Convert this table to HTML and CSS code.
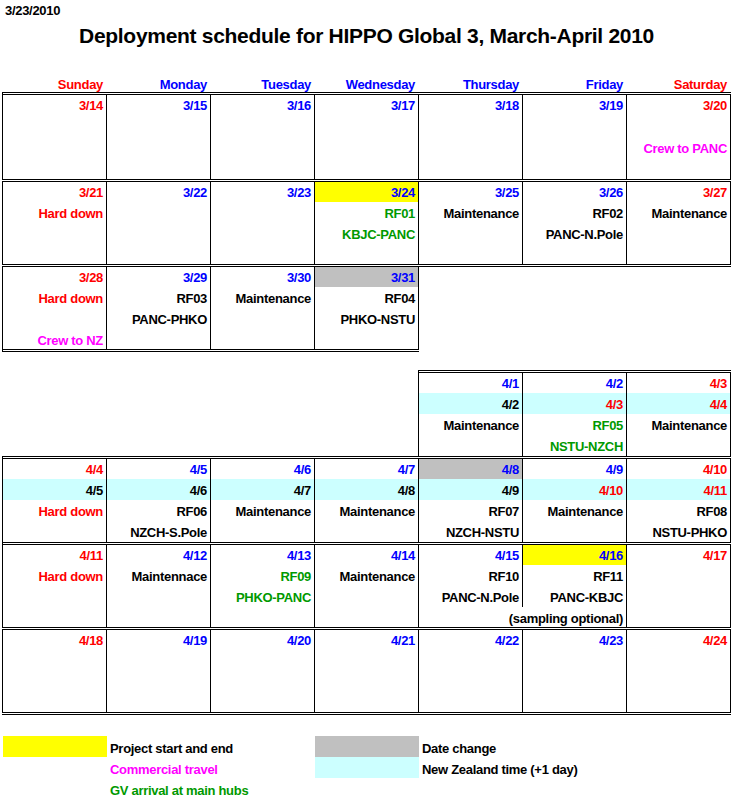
FILE: index.html
```html
<!DOCTYPE html>
<html>
<head>
<meta charset="utf-8">
<title>Deployment schedule for HIPPO Global 3</title>
<link rel="stylesheet" href="styles.css">
</head>
<body>
<div class="stamp">3/23/2010</div>
<h1 class="title">Deployment schedule for HIPPO Global 3, March-April 2010</h1>

<div class="days">
  <div class="r">Sunday</div>
  <div class="b">Monday</div>
  <div class="b">Tuesday</div>
  <div class="b">Wednesday</div>
  <div class="b">Thursday</div>
  <div class="b">Friday</div>
  <div class="r">Saturday</div>
</div>

<div class="block">
  <div class="week c7 bt h84">
    <div class="cell"><div class="ln r">3/14</div></div>
    <div class="cell"><div class="ln b">3/15</div></div>
    <div class="cell"><div class="ln b">3/16</div></div>
    <div class="cell"><div class="ln b">3/17</div></div>
    <div class="cell"><div class="ln b">3/18</div></div>
    <div class="cell"><div class="ln b">3/19</div></div>
    <div class="cell"><div class="ln r">3/20</div><div class="ln"></div><div class="ln m">Crew to PANC</div></div>
  </div>
  <div class="week c7 bt bb h82">
    <div class="cell"><div class="ln r">3/21</div><div class="ln r">Hard down</div></div>
    <div class="cell"><div class="ln b">3/22</div></div>
    <div class="cell"><div class="ln b">3/23</div></div>
    <div class="cell"><div class="ln b yel">3/24</div><div class="ln g">RF01</div><div class="ln g">KBJC-PANC</div></div>
    <div class="cell"><div class="ln b">3/25</div><div class="ln">Maintenance</div></div>
    <div class="cell"><div class="ln b">3/26</div><div class="ln">RF02</div><div class="ln">PANC-N.Pole</div></div>
    <div class="cell"><div class="ln r">3/27</div><div class="ln">Maintenance</div></div>
  </div>
  <div class="week c4 bb h82">
    <div class="cell"><div class="ln r">3/28</div><div class="ln r">Hard down</div><div class="ln"></div><div class="ln m">Crew to NZ</div></div>
    <div class="cell"><div class="ln b">3/29</div><div class="ln">RF03</div><div class="ln">PANC-PHKO</div></div>
    <div class="cell"><div class="ln b">3/30</div><div class="ln">Maintenance</div></div>
    <div class="cell"><div class="ln b gry">3/31</div><div class="ln">RF04</div><div class="ln">PHKO-NSTU</div></div>
  </div>
</div>

<div class="block block2">
  <div class="week c3 bt shift">
    <div class="cell"><div class="ln b">4/1</div><div class="ln nz">4/2</div><div class="ln">Maintenance</div></div>
    <div class="cell"><div class="ln b">4/2</div><div class="ln nz r">4/3</div><div class="ln g">RF05</div><div class="ln g">NSTU-NZCH</div></div>
    <div class="cell"><div class="ln r">4/3</div><div class="ln nz r">4/4</div><div class="ln">Maintenance</div></div>
  </div>
  <div class="week c7 bt">
    <div class="cell"><div class="ln r">4/4</div><div class="ln nz">4/5</div><div class="ln r">Hard down</div></div>
    <div class="cell"><div class="ln b">4/5</div><div class="ln nz">4/6</div><div class="ln">RF06</div><div class="ln">NZCH-S.Pole</div></div>
    <div class="cell"><div class="ln b">4/6</div><div class="ln nz">4/7</div><div class="ln">Maintenance</div></div>
    <div class="cell"><div class="ln b">4/7</div><div class="ln nz">4/8</div><div class="ln">Maintenance</div></div>
    <div class="cell"><div class="ln b gry">4/8</div><div class="ln nz">4/9</div><div class="ln">RF07</div><div class="ln">NZCH-NSTU</div></div>
    <div class="cell"><div class="ln b">4/9</div><div class="ln nz r">4/10</div><div class="ln">Maintenance</div></div>
    <div class="cell"><div class="ln r">4/10</div><div class="ln nz r">4/11</div><div class="ln">RF08</div><div class="ln">NSTU-PHKO</div></div>
  </div>
  <div class="week c7 bt h82">
    <div class="cell"><div class="ln r">4/11</div><div class="ln r">Hard down</div></div>
    <div class="cell"><div class="ln b">4/12</div><div class="ln">Maintennace</div></div>
    <div class="cell"><div class="ln b">4/13</div><div class="ln g">RF09</div><div class="ln g">PHKO-PANC</div></div>
    <div class="cell"><div class="ln b">4/14</div><div class="ln">Maintenance</div></div>
    <div class="cell"><div class="ln b">4/15</div><div class="ln">RF10</div><div class="ln">PANC-N.Pole</div></div>
    <div class="cell"><div class="ln b yel">4/16</div><div class="ln">RF11</div><div class="ln">PANC-KBJC</div><div class="ln spill"><span class="cover">(sampling optional)</span></div></div>
    <div class="cell"><div class="ln r">4/17</div></div>
  </div>
  <div class="week c7 bt bb h82">
    <div class="cell"><div class="ln r">4/18</div></div>
    <div class="cell"><div class="ln b">4/19</div></div>
    <div class="cell"><div class="ln b">4/20</div></div>
    <div class="cell"><div class="ln b">4/21</div></div>
    <div class="cell"><div class="ln b">4/22</div></div>
    <div class="cell"><div class="ln b">4/23</div></div>
    <div class="cell"><div class="ln r">4/24</div></div>
  </div>
</div>

<div class="legend">
  <div class="swatch yel"></div>
  <div class="ltext">Project start and end</div>
  <div class="swatch gry"></div>
  <div class="ltext">Date change</div>

  <div class="ltext m row2">Commercial travel</div>
  <div class="swatch nz"></div>
  <div class="ltext">New Zealand time (+1 day)</div>

  <div class="ltext g row3">GV arrival at main hubs</div>
</div>
</body>
</html>
```

FILE: styles.css
```css
* {
  box-sizing: border-box;
}

body {
  margin: 0;
  width: 733px;
  background: #ffffff;
  color: #000000;
  font-family: "Liberation Sans", Arial, sans-serif;
  font-weight: bold;
  font-size: 13px;
  letter-spacing: -0.3px;
}

.r { color: #ff0000; }
.b { color: #0000ff; }
.m { color: #ff00ff; }
.g { color: #009900; }

.yel { background: #ffff00; }
.gry { background: #c0c0c0; }
.nz { background: #ccffff; }

.stamp {
  height: 21px;
  line-height: 21px;
  padding-left: 5px;
}

.title {
  margin: 0;
  height: 30px;
  line-height: 30px;
  font-size: 21px;
  font-weight: bold;
  letter-spacing: -0.3px;
  text-align: center;
}

.days {
  display: grid;
  grid-template-columns: repeat(7, 104px);
  margin: 20px 0 0 3px;
  height: 21px;
}

.days > div {
  height: 21px;
  line-height: 27px;
  text-align: right;
  padding-right: 4px;
  white-space: nowrap;
}

.block {
  margin-left: 2px;
}

.block2 {
  margin-top: 18px;
}

.week {
  display: grid;
  grid-auto-rows: 83px;
  width: max-content;
  border-left: 1px solid #000;
}

.c7 { grid-template-columns: repeat(7, 104px); }
.c4 { grid-template-columns: repeat(4, 104px); }
.c3 { grid-template-columns: repeat(3, 104px); }

.shift {
  margin-left: 416px;
}

.h84 { grid-auto-rows: 84px; }
.h82 { grid-auto-rows: 82px; }

.bt { border-top: 3px double #000; }
.bb { border-bottom: 3px double #000; }

.cell {
  display: flex;
  flex-direction: column;
  border-right: 1px solid #000;
  min-width: 0;
}

.ln {
  flex: none;
  height: 21px;
  line-height: 24px;
  text-align: right;
  padding-right: 3px;
  white-space: nowrap;
}

.ln:first-child {
  height: 20px;
  line-height: 21px;
}

.h84 .ln:first-child {
  height: 21px;
  line-height: 22px;
}

.h82 .ln:nth-child(4) {
  height: 20px;
}

.spill {
  display: flex;
  justify-content: flex-end;
}

.cover {
  background: #ffffff;
  line-height: 24px;
}

.legend {
  display: grid;
  grid-template-columns: repeat(7, 104px);
  grid-template-rows: repeat(3, 21px);
  margin: 21px 0 0 3px;
}

.swatch {
  grid-column: 4;
}

.legend .yel {
  grid-column: 1;
  grid-row: 1;
}

.legend .gry {
  grid-row: 1;
}

.legend .nz {
  grid-row: 2;
}

.ltext {
  grid-column: span 2;
  padding-left: 3px;
  line-height: 25px;
  white-space: nowrap;
}

.row2 {
  grid-column: 2 / span 2;
  grid-row: 2;
}

.row3 {
  grid-column: 2 / span 2;
  grid-row: 3;
}
```
